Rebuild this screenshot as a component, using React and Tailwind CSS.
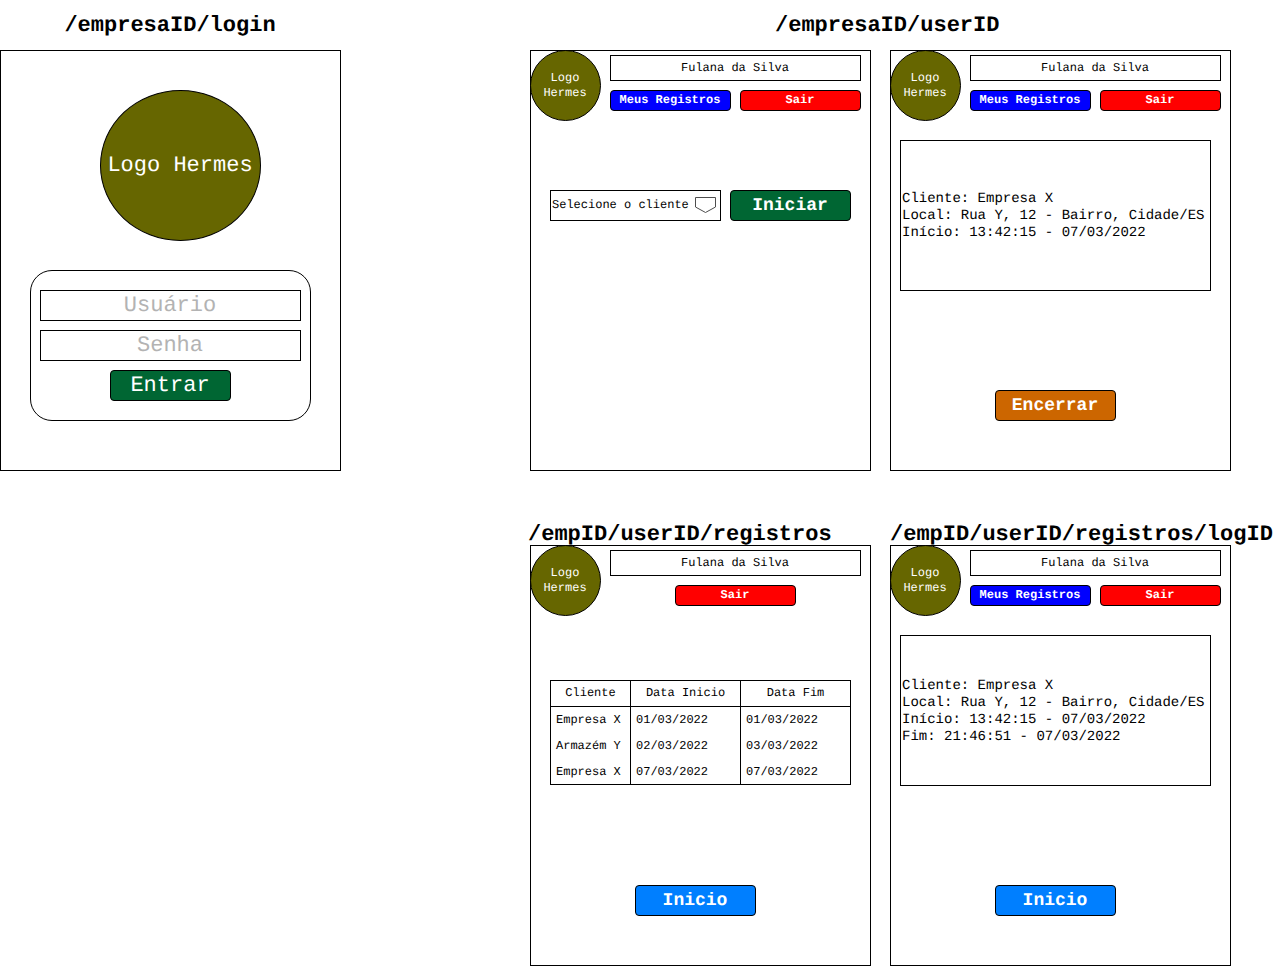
const FRAME = 'w-[341px] h-[421px] border border-black bg-white shrink-0';
const BTN = 'flex items-center justify-center border border-black rounded-[4px] text-white pr-px';

function Title({ className, children }) {
  return <div className={`text-[22px] leading-[26px] font-bold text-black whitespace-nowrap ${className}`}>{children}</div>;
}

function Logo({ className, children }) {
  return (
    <div className={`flex items-center justify-center text-center rounded-[50%] border border-black bg-[#666600] text-white pr-px ${className}`}>
      {children}
    </div>
  );
}

function Header({ showRecords = true }) {
  return (
    <div className="flex -mx-px -mt-px h-[71px]">
      <Logo className="w-[71px] h-[71px] shrink-0 text-[12px] leading-[15px]">
        <span>Logo<br />Hermes</span>
      </Logo>
      <div className="ml-[9px] mt-[5px] w-[251px]">
        <div className="flex items-center justify-center h-[26px] border border-black text-[12px] pb-[1px] pr-px">Fulana da Silva</div>
        <div className={`flex mt-[9px] ${showRecords ? 'gap-[9px]' : 'justify-center'}`}>
          {showRecords ? (
            <div className={`${BTN} w-[121px] h-[21px] bg-[#0000ff] text-[12px] font-bold pb-[2px]`}>Meus Registros</div>
          ) : null}
          <div className={`${BTN} w-[121px] h-[21px] bg-[#ff0000] text-[12px] font-bold pb-[2px]`}>Sair</div>
        </div>
      </div>
    </div>
  );
}

function Details({ lines }) {
  return (
    <div className="flex flex-col justify-center ml-[9px] mt-[19px] w-[311px] h-[151px] border border-black pl-px pt-[2px] text-[14px] leading-[17px] text-black">
      {lines.map((line) => <div key={line} className="whitespace-nowrap">{line}</div>)}
    </div>
  );
}

function LoginFrame() {
  return (
    <div className={FRAME}>
      <Logo className="ml-[99px] mt-[39px] w-[161px] h-[151px] text-[22px] pb-[1px]">Logo Hermes</Logo>
      <div className="ml-[29px] mt-[29px] w-[281px] h-[151px] border border-black rounded-[22px] pt-[19px] pl-[9px]">
        <div className="flex items-center justify-center w-[261px] h-[31px] border border-black text-[22px] text-[#b3b3b3] pb-[1px] pr-px">Usuário</div>
        <div className="flex items-center justify-center w-[261px] h-[31px] mt-[9px] border border-black text-[22px] text-[#b3b3b3] pb-[1px] pr-px">Senha</div>
        <div className={`${BTN} ml-[70px] mt-[9px] w-[121px] h-[31px] bg-[#006633] text-[22px] pb-[1px]`}>Entrar</div>
      </div>
    </div>
  );
}

function RecordsTable() {
  const rows = [
    ['Empresa X', '01/03/2022', '01/03/2022'],
    ['Armazém Y', '02/03/2022', '03/03/2022'],
    ['Empresa X', '07/03/2022', '07/03/2022'],
  ];
  return (
    <table className="ml-[19px] mt-[64px] w-[301px] table-fixed border-collapse border border-black text-[12px] text-black">
      <colgroup>
        <col className="w-[80px]" />
        <col className="w-[110px]" />
        <col className="w-[110px]" />
      </colgroup>
      <thead>
        <tr className="h-[26px] border-b border-black">
          <th className="font-normal border-r border-black pb-[1px]">Cliente</th>
          <th className="font-normal border-r border-black pb-[1px]">Data Inicio</th>
          <th className="font-normal pb-[1px]">Data Fim</th>
        </tr>
      </thead>
      <tbody>
        {rows.map((r, i) => (
          <tr key={i} className={`h-[26px] ${i === 2 ? 'pt-[2px]' : ''}`}>
            <td className={`pl-[5px] border-r border-black whitespace-nowrap ${i === 2 ? 'pt-[2px]' : ''}`}>{r[0]}</td>
            <td className={`pl-[5px] border-r border-black ${i === 2 ? 'pt-[2px]' : ''}`}>{r[1]}</td>
            <td className={`pl-[5px] ${i === 2 ? 'pt-[2px]' : ''}`}>{r[2]}</td>
          </tr>
        ))}
      </tbody>
    </table>
  );
}

export default function App() {
  return (
    <div className="flex w-[1273px] h-[966px] overflow-hidden bg-white text-black font-['Liberation_Mono',monospace] [text-rendering:geometricPrecision]">
      {/* login */}
      <div className="w-[341px] shrink-0">
        <Title className="h-[50px] pt-[13px] pr-px text-center">/empresaID/login</Title>
        <LoginFrame />
      </div>

      <div className="ml-[189px] w-[743px] shrink-0">
        <Title className="h-[50px] pt-[13px] pl-[245px]">/empresaID/userID</Title>
        <div className="flex gap-[19px]">
          <div className={FRAME}>
            <Header />
            <div className="flex ml-[19px] mt-[69px] gap-[9px]">
              <div className="flex items-center justify-between w-[171px] h-[31px] border border-black pl-px pr-[3px] text-[12px]">
                <span className="pb-[1px]">Selecione o cliente</span>
                <svg width="23" height="18" viewBox="0 0 23 18" className="shrink-0 mt-[-1px]">
                  <path d="M1.5 1.5H21.5V11L11.5 16.5L1.5 11Z" fill="#fff" stroke="#4d4d4d" strokeWidth="1" />
                </svg>
              </div>
              <div className={`${BTN} w-[121px] h-[31px] bg-[#006633] text-[18px] font-bold pt-[2px]`}>Iniciar</div>
            </div>
          </div>
          <div className={FRAME}>
            <Header />
            <Details lines={['Cliente: Empresa X', 'Local: Rua Y, 12 - Bairro, Cidade/ES', 'Início: 13:42:15 - 07/03/2022']} />
            <div className={`${BTN} ml-[104px] mt-[99px] w-[121px] h-[31px] bg-[#cc6600] text-[18px] font-bold pt-[2px]`}>Encerrar</div>
          </div>
        </div>

        <div className="flex mt-[51px] h-[23px]">
          <Title className="w-[360px] -ml-[2px] mr-[2px]">/empID/userID/registros</Title>
          <Title>/empID/userID/registros/logID</Title>
        </div>
        <div className="flex gap-[19px]">
          <div className={FRAME}>
            <Header showRecords={false} />
            <RecordsTable />
            <div className={`${BTN} ml-[104px] mt-[100px] w-[121px] h-[31px] bg-[#007fff] text-[18px] font-bold pt-[2px]`}>Inicio</div>
          </div>
          <div className={FRAME}>
            <Header />
            <Details lines={['Cliente: Empresa X', 'Local: Rua Y, 12 - Bairro, Cidade/ES', 'Início: 13:42:15 - 07/03/2022', 'Fim: 21:46:51 - 07/03/2022']} />
            <div className={`${BTN} ml-[104px] mt-[99px] w-[121px] h-[31px] bg-[#007fff] text-[18px] font-bold pt-[2px]`}>Inicio</div>
          </div>
        </div>
      </div>
    </div>
  );
}
